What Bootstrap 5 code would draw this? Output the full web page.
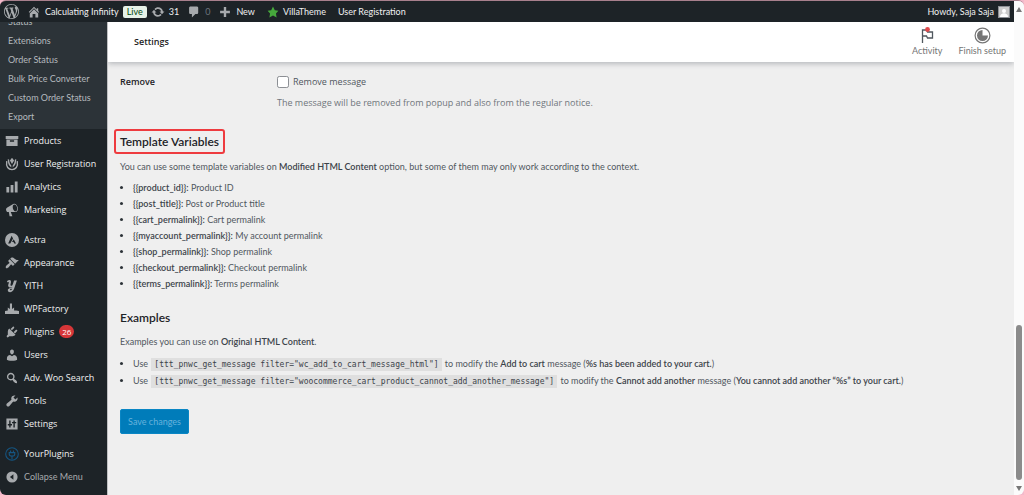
<!DOCTYPE html>
<html lang="en">
<head>
<meta charset="utf-8">
<meta name="viewport" content="width=device-width, initial-scale=1">
<title>Settings</title>
<link href="https://cdn.jsdelivr.net/npm/bootstrap@5.3.0/dist/css/bootstrap.min.css" rel="stylesheet">
<style>
  body { font: 9px/16px Lato, "Open Sans", sans-serif; color: #50575e; background: #f3b9cb; }
  a { color: inherit; text-decoration: none; }
  svg { fill: #a7aaad; flex: none; display: block; }
  .frame { height: 100vh; border-top: 1px solid #a8808d; border-radius: 6px; overflow: hidden; }
  .adminbar { height: 21px; background: #1d2327; color: #f0f0f1; z-index: 3; line-height: 21px; }
  .live { background: #e6f2e8; color: #00450c; border-radius: 2px; line-height: 12px; padding: 0 4px; }
  .avatar { width: 12px; height: 12px; background: #ccc; border: 1px solid #8c8f94; }
  .side { width: 107px; background: #1d2327; color: #f0f0f1; overflow: hidden; }
  .submenu { background: #2c3338; color: #b4b9be; margin-top: -10px; padding: 0 0 3px 8px; }
  .submenu a { display: block; line-height: 19px; }
  .side-item { display: flex; align-items: center; gap: 5px; height: 23px; padding-left: 5px; font-family: "Open Sans", sans-serif; white-space: nowrap; }
  .side-item svg { width: 14px; height: 14px; }
  .group-start { margin-top: 7px; }
  .count { background: #d63638; color: #fff; border-radius: 8px; font-size: 8px; line-height: 13px; padding: 0 3px; }
  .collapse-btn { border: 0; background: none; color: #a7aaad; font-family: Lato, sans-serif; padding-right: 0; }
  .page-head { height: 40px; background: #fff; box-shadow: 0 2px 5px rgba(60,65,80,.3); z-index: 2; padding: 0 8px 0 26px; }
  .page-head h1 { font: 600 9px/16px "Open Sans", sans-serif; color: #1e1e1e; }
  .tool { border: 0; background: none; padding: 0; color: #757575; line-height: 13px; }
  .content-pane { background: #efefef; border-left: 1px solid #bfc0c2; }
  .settings-body { padding: 12px; }
  .setting-row { font-family: "Open Sans", sans-serif; }
  .label-col { width: 157px; font-weight: 600; color: #1d2327; }
  .tick { width: 12px; height: 12px; margin: 0; border-color: #8c8f94; border-radius: 3px; }
  .hint { color: #70767c; margin-top: 5px; }
  h2 { font-size: 12px; line-height: 25px; font-weight: 600; color: #1d2327; margin: 0; }
  h2 .boxed { display: inline-block; line-height: 21px; border: 2px solid #ee3b3f; border-radius: 3px; padding: 0 4px; margin-left: -6px; }
  .sec-vars { margin-top: 18px; }
  .sec-ex { margin-top: 13px; }
  .intro { margin: 5px 0; }
  .sec-ex + .intro { margin-top: 4px; }
  b { font-weight: 600; color: #3c434a; }
  .notes { padding-left: 13px; margin: 0; }
  .notes li::marker { color: #2c3338; }
  .examples li { line-height: 17px; }
  code { font: 8px/13px "DejaVu Sans Mono", monospace; color: #3c434a; background: #dfdfdf; padding: 2px 3px; margin: 0 1px; }
  .save { width: 69px; height: 25px; background: #007cba; border: 1px solid #0a86c4; border-radius: 2px; color: #66b2dc; padding: 0; margin-top: 20px; }
  .scroll-strip { width: 10px; background: #fbfbfb; padding: 6px 0 4px; }
  .thumb { width: 6px; background: #8b8b8b; border-radius: 3px; height: 32%; margin-bottom: 6px; }
</style>
<script src="https://cdn.jsdelivr.net/npm/bootstrap@5.3.0/dist/js/bootstrap.bundle.min.js"></script>
</head>
<body>
<div class="frame d-flex">
 <div class="flex-grow-1 d-flex flex-column overflow-hidden">
  <header class="adminbar d-flex align-items-center position-relative ps-1 pe-1">
    <a href="#" aria-label="WordPress"><svg width="15" height="15" viewBox="0 0 20 20"><path d="M20 10c0-5.51-4.49-10-10-10C4.48 0 0 4.49 0 10c0 5.52 4.48 10 10 10 5.51 0 10-4.48 10-10zM7.78 15.37L4.37 6.22c.55-.02 1.17-.08 1.17-.08.5-.06.44-1.13-.06-1.11 0 0-1.45.11-2.37.11-.18 0-.37 0-.58-.01C4.12 2.69 6.87 1.11 10 1.11c2.33 0 4.45.87 6.05 2.34-.68-.11-1.65.39-1.65 1.58 0 .74.45 1.36.9 2.1.35.61.55 1.36.55 2.46 0 1.49-1.4 5-1.4 5l-3.03-8.37c.54-.02.82-.17.82-.17.5-.05.44-1.25-.06-1.22 0 0-1.44.12-2.38.12-.87 0-2.33-.12-2.33-.12-.5-.03-.56 1.2-.06 1.22l.92.08 1.26 3.41zM17.41 10c.24-.64.74-1.87.43-4.25.7 1.29 1.05 2.71 1.05 4.25 0 3.29-1.73 6.24-4.4 7.78.97-2.59 1.94-5.2 2.92-7.78zM6.1 18.09C3.12 16.65 1.11 13.53 1.11 10c0-1.3.23-2.48.72-3.59C3.25 10.3 4.67 14.2 6.1 18.09zm4.03-6.63l2.58 6.98c-.86.29-1.76.45-2.71.45-.79 0-1.57-.11-2.29-.33.81-2.38 1.62-4.74 2.42-7.1z"/></svg></a>
    <a href="#" class="d-flex align-items-center gap-1 ms-2"><svg width="14" height="14" viewBox="0 0 20 20"><path d="M16 8.5l1.53 1.53-1.06 1.06L10 4.6l-6.47 6.49-1.06-1.06L10 2.5l4 4v-2h2v4zm-6-2.46l6 5.99V18H12v-5H8v5H4v-5.97z"/></svg>Calculating Infinity</a>
    <span class="live ms-1">Live</span>
    <a href="#" class="d-flex align-items-center gap-1 ms-1"><svg width="14" height="14" viewBox="0 0 20 20"><path d="M10.2 3.28c3.53 0 6.43 2.61 6.92 6h2.08l-3.5 4-3.5-4h2.32c-.45-1.97-2.21-3.45-4.32-3.45-1.45 0-2.73.71-3.54 1.78L4.95 5.66C6.23 4.2 8.11 3.28 10.2 3.28zm-.4 13.44c-3.52 0-6.43-2.61-6.92-6H.8l3.5-4c1.17 1.33 2.33 2.67 3.5 4H5.48c.45 1.97 2.21 3.45 4.32 3.45 1.45 0 2.73-.71 3.54-1.78l1.71 1.95c-1.28 1.46-3.15 2.38-5.25 2.38z"/></svg>31</a>
    <a href="#" class="d-flex align-items-center gap-1 ms-2 text-secondary"><svg width="14" height="14" viewBox="0 0 20 20"><path d="M5 2h9c1.1 0 2 .9 2 2v7c0 1.1-.9 2-2 2h-2l-5 5v-5H5c-1.1 0-2-.9-2-2V4c0-1.1.9-2 2-2z"/></svg>0</a>
    <a href="#" class="d-flex align-items-center gap-1 ms-2"><svg width="14" height="14" viewBox="0 0 20 20"><path d="M8.3 3h3.4v5.300H17v3.400h-5.300V17H8.300v-5.300H3V8.300h5.300z"/></svg>New</a>
    <a href="#" class="d-flex align-items-center gap-1 ms-2 ps-1"><svg width="12" height="12" viewBox="0 0 20 20"><path fill="#46a83c" d="M10 1l3 6 6 .75-4.120 4.620L16 19l-6-3-6 3 1.130-6.630L1 7.750 7 7z"/></svg>VillaTheme</a>
    <a href="#" class="ms-2 ps-1">User Registration</a>
    <a href="#" class="d-flex align-items-center gap-1 ms-auto">Howdy, Saja Saja<span class="avatar"><svg width="10" height="10" viewBox="0 0 10 10"><circle cx="5" cy="4" r="2" fill="#fff"/><path d="M1 10c0-5 8-5 8 0z" fill="#fff"/></svg></span></a>
  </header>
  <div class="flex-grow-1 d-flex overflow-hidden">
   <nav class="side flex-shrink-0" aria-label="Main menu">
    <div class="submenu">
      <a href="#">Status</a><a href="#">Extensions</a><a href="#">Order Status</a><a href="#">Bulk Price Converter</a><a href="#">Custom Order Status</a><a href="#">Export</a>
    </div>
    <a class="side-item" href="#"><svg viewBox="0 0 20 20"><path d="M1 3h18v4H1zM2 8h16v9H2zm5 1v2h6V9z" fill-rule="evenodd"/></svg>Products</a>
    <a class="side-item" href="#"><svg viewBox="0 0 20 20"><path d="M10 1l3 4-3 5-3-5zM4 3c0 6 1 9 5 12v-3C7 10 6 8 6 4zm12 0c0 6-1 9-5 12v-3c2-2 3-4 3-8z"/><path d="M2.500 6C1 14 5 18 10 18s9-4 7.500-12" fill="none" stroke="#a7aaad" stroke-width="2"/></svg>User Registration</a>
    <a class="side-item" href="#"><svg viewBox="0 0 20 20"><path d="M18 18V2h-4v16h4zm-6 0V7H8v11h4zm-6 0v-8H2v8h4z"/></svg>Analytics</a>
    <a class="side-item" href="#"><svg viewBox="0 0 20 20"><path d="M18.150 5.940c.460 1.620.380 3.220-.020 4.480-.420 1.280-1.260 2.180-2.300 2.480-.160.060-.260.060-.400.060-.060.020-.120.020-.180.020-.060.020-.140.020-.220.020h-6.800l2.220 5.500c.020.140-.060.260-.140.340-.080.100-.240.160-.340.160H6.950c-.100 0-.260-.060-.340-.160-.080-.080-.160-.200-.140-.340l-1-5.500H4.250l-.020-.020c-.500.060-1.080-.180-1.540-.620s-.880-1.080-1.060-1.880c-.240-.800-.200-1.560-.020-2.200.180-.620.580-1.080 1.060-1.300l.020-.020 9-5.400c.100-.060.180-.100.240-.160.060-.040.140-.080.240-.120.160-.080.280-.120.500-.180 1.040-.300 2.240.100 3.220.980s1.840 2.240 2.260 3.860zm-2.580 5.980h-.020c.400-.100.740-.340 1.040-.700.580-.700.860-1.760.860-3.040 0-.640-.100-1.300-.280-1.980-.340-1.360-1.020-2.500-1.780-3.240s-1.680-1.100-2.460-.880c-.820.220-1.400.960-1.700 2-.320 1.040-.280 2.360.060 3.720.380 1.360 1 2.500 1.800 3.240.780.740 1.620 1.100 2.480.880z"/></svg>Marketing</a>
    <a class="side-item group-start" href="#"><svg viewBox="0 0 20 20"><path fill-rule="evenodd" d="M10 0a10 10 0 1 0 0 20 10 10 0 0 0 0-20zM9.500 4l2 4-4 7H4.500zM12.500 9l3.200 6h-2.500l-1-2H10z"/></svg>Astra</a>
    <a class="side-item" href="#"><svg viewBox="0 0 20 20"><path d="M14.480 11.060L7.410 3.990l1.500-1.500c.500-.560 2.300-.470 3.510.320 1.210.800 1.430 1.280 2.910 2.100 1.180.640 2.450 1.260 4.450.850zm-.710.710L6.700 4.700 4.930 6.470c-.390.390-.390 1.020 0 1.410l1.060 1.060c.390.390.390 1.030 0 1.420-.600.600-1.430 1.110-2.210 1.690-.350.260-.700.530-1.010.840C1.430 14.230.4 16.080 1.400 17.070c.990 1 2.840-.030 4.180-1.360.310-.310.580-.660.850-1.020.570-.780 1.080-1.610 1.690-2.210.390-.390 1.020-.390 1.410 0l1.060 1.060c.390.390 1.020.390 1.410 0z"/></svg>Appearance</a>
    <a class="side-item" href="#"><svg viewBox="0 0 20 20"><path d="M3 3c4-3 7-1 5 4-1 3 2 4 3 1l2-6h4l-4 12c-2 6-9 6-9 2 0-3 4-3 7-4-4 1-8-1-6-5 1-3 0-3-2-2zm7 11c-3 0-4 2-2 2 1 0 2-1 2-2z"/></svg>YITH</a>
    <a class="side-item" href="#"><svg viewBox="0 0 20 20"><path d="M0 17v-4l4-1V8l3 2V2h3v8l3-2v4h3l4 1v4z"/></svg>WPFactory</a>
    <a class="side-item" href="#"><svg viewBox="0 0 20 20"><path d="M13.110 4.360L9.870 7.600 8 5.730l3.240-3.240c.350-.340 1.050-.200 1.560.320.520.510.660 1.210.310 1.550zm-8 1.770l.910-1.120 9.010 9.010-1.190.840c-.710.710-2.630 1.160-3.820 1.160H6.140L4.900 17.260c-.590.590-1.540.590-2.120 0-.590-.580-.590-1.530 0-2.120l1.240-1.240v-3.880c0-1.130.4-3.190 1.090-3.890zm7.260 3.970l3.240-3.240c.340-.350 1.040-.210 1.550.310.520.510.660 1.210.310 1.550l-3.240 3.250z"/></svg>Plugins<span class="count">26</span></a>
    <a class="side-item" href="#"><svg viewBox="0 0 20 20"><path d="M10 9.250c-2.270 0-2.730-3.440-2.730-3.440C7 4.020 7.820 2 9.970 2c2.160 0 2.980 2.020 2.710 3.810 0 0-.410 3.440-2.680 3.440zm0 2.570L12.720 10c2.390 0 4.520 2.330 4.520 4.530v2.490s-3.650 1.130-7.240 1.130c-3.650 0-7.240-1.130-7.240-1.130v-2.490c0-2.250 1.940-4.480 4.470-4.480z"/></svg>Users</a>
    <a class="side-item" href="#"><svg viewBox="0 0 20 20"><path d="M12.140 4.180c1.870 1.870 2.110 4.750.72 6.890.12.100.22.210.36.310.200.160.470.360.810.590.340.240.560.390.660.470.420.310.73.570.94.78.320.320.600.650.840 1 .250.350.440.690.590 1.040.140.350.210.680.180 1-.020.320-.140.590-.360.810s-.490.340-.810.360c-.310.020-.650-.040-.990-.190-.350-.140-.700-.340-1.040-.590-.350-.240-.680-.520-1-.840-.210-.210-.470-.520-.770-.930-.100-.130-.250-.350-.470-.660-.220-.320-.400-.570-.560-.780-.160-.200-.290-.350-.440-.500-2.070 1.090-4.690.760-6.440-.980-2.140-2.150-2.140-5.640 0-7.780 2.150-2.150 5.630-2.150 7.780 0zm-1.410 6.360c1.360-1.370 1.360-3.580 0-4.950-1.370-1.370-3.590-1.370-4.950 0-1.370 1.370-1.370 3.580 0 4.950 1.360 1.360 3.580 1.360 4.950 0z"/></svg>Adv. Woo Search</a>
    <a class="side-item" href="#"><svg viewBox="0 0 20 20"><path d="M16.680 9.770c-1.340 1.340-3.300 1.670-4.950.99l-5.410 6.520c-.99.99-2.590.99-3.580 0s-.99-2.590 0-3.570l6.520-5.420c-.68-1.650-.35-3.610.99-4.950 1.280-1.280 3.120-1.620 4.720-1.060l-2.890 2.890 2.820 2.820 2.860-2.870c.53 1.580.18 3.390-1.080 4.650z"/></svg>Tools</a>
    <a class="side-item" href="#"><svg viewBox="0 0 20 20"><path fill-rule="evenodd" d="M2 2h16v16H2zm4 3v5H4v2h2v3h2v-3h2v-2H8V5zm6 0v2h-2v2h2v6h2V9h2V7h-2V5z"/></svg>Settings</a>
    <a class="side-item group-start" href="#"><svg viewBox="0 0 20 20"><g fill="none" stroke="#155683" stroke-width="1.500"><circle cx="10" cy="10" r="9"/><path d="M8 5v3m4-3v3M6 8h8v2c0 4-8 4-8 0zm4 5v5"/></g></svg>YourPlugins</a>
    <button class="side-item collapse-btn" type="button"><svg viewBox="0 0 20 20"><path fill-rule="evenodd" d="M10 2a8 8 0 1 0 0 16 8 8 0 0 0 0-16zm2 4v8l-5-4z"/></svg>Collapse Menu</button>
   </nav>
   <main class="content-pane flex-grow-1 overflow-hidden">
    <div class="page-head d-flex align-items-center position-relative">
      <h1 class="m-0 me-auto">Settings</h1>
      <button type="button" class="tool d-flex flex-column align-items-center me-3"><svg width="18" height="17" viewBox="0 0 18 17"><path d="M4.500 16V3h4l1 2h5v6h-5l-1-2h-4" fill="none" stroke="#50575e" stroke-width="1.300"/><circle cx="9.500" cy="2.500" r="2.400" fill="#e0484b"/></svg>Activity</button>
      <button type="button" class="tool d-flex flex-column align-items-center"><svg width="17" height="17" viewBox="0 0 17 17"><circle cx="8.500" cy="8.500" r="7.400" fill="none" stroke="#757575" stroke-width="1.200"/><path d="M8.500 8.500V3a5.500 5.500 0 1 0 5.500 5.500z" fill="#757575"/></svg>Finish setup</button>
    </div>
    <form class="settings-body" onsubmit="return false">
      <div class="setting-row d-flex">
        <div class="label-col flex-shrink-0">Remove</div>
        <div>
          <div class="d-flex align-items-center gap-1"><input class="form-check-input tick" type="checkbox" id="rm"><label for="rm">Remove message</label></div>
          <div class="hint">The message will be removed from popup and also from the regular notice.</div>
        </div>
      </div>
      <h2 class="sec-vars"><span class="boxed">Template Variables</span></h2>
      <p class="intro">You can use some template variables on <b>Modified HTML Content</b> option, but some of them may only work according to the context.</p>
      <ul class="notes">
        <li><b>{{product_id}}:</b> Product ID</li>
        <li><b>{{post_title}}:</b> Post or Product title</li>
        <li><b>{{cart_permalink}}:</b> Cart permalink</li>
        <li><b>{{myaccount_permalink}}:</b> My account permalink</li>
        <li><b>{{shop_permalink}}:</b> Shop permalink</li>
        <li><b>{{checkout_permalink}}:</b> Checkout permalink</li>
        <li><b>{{terms_permalink}}:</b> Terms permalink</li>
      </ul>
      <h2 class="sec-ex">Examples</h2>
      <p class="intro">Examples you can use on <b>Original HTML Content</b>.</p>
      <ul class="notes examples">
        <li>Use <code>[ttt_pnwc_get_message filter="wc_add_to_cart_message_html"]</code> to modify the <b>Add to cart</b> message (<b>%s has been added to your cart.</b>)</li>
        <li>Use <code>[ttt_pnwc_get_message filter="woocommerce_cart_product_cannot_add_another_message"]</code> to modify the <b>Cannot add another</b> message (<b>You cannot add another “%s” to your cart.</b>)</li>
      </ul>
      <button class="save" type="submit">Save changes</button>
    </form>
   </main>
  </div>
 </div>
 <div class="scroll-strip d-flex flex-column align-items-center flex-shrink-0" aria-hidden="true">
   <svg width="6" height="5" viewBox="0 0 6 5"><path d="M3 0l3 5H0z" fill="#777"/></svg>
   <div class="thumb mt-auto"></div>
   <svg width="6" height="5" viewBox="0 0 6 5"><path d="M3 5l3-5H0z" fill="#777"/></svg>
 </div>
</div>
</body>
</html>
